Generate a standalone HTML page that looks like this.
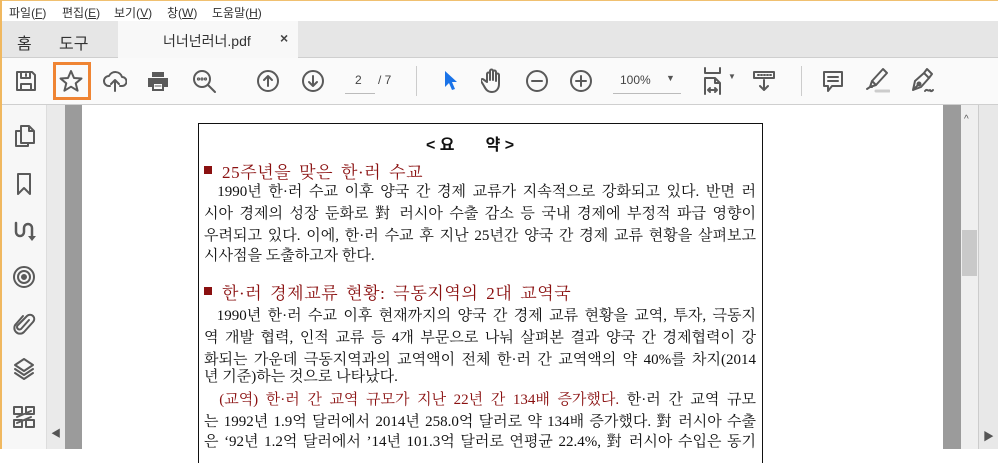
<!DOCTYPE html>
<html><head><meta charset="utf-8"><style>
*{margin:0;padding:0;box-sizing:border-box}
body{width:998px;height:449px;overflow:hidden;position:relative;background:#fff;font-family:"Liberation Sans","Noto Sans CJK KR",sans-serif}
.a{position:absolute}
.menu{top:0;left:0;width:998px;height:21px;background:#fff;border-top:1px solid #f0c070;font-size:12px;color:#333}
.menu span{position:absolute;top:3px}
.tabs{top:21px;left:0;width:998px;height:37px;background:#e6e6e6;border-bottom:1px solid #cfcfcf}
.tb{top:58px;left:0;width:998px;height:47px;background:#fafafa;border-bottom:1px solid #cfcfcf}
svg.i{position:absolute;fill:none;stroke:#5a5a5a;stroke-width:2;stroke-linecap:round;stroke-linejoin:round}
.doc{font-family:"Liberation Serif","Noto Serif CJK KR",serif;font-size:15px;color:#111}
.ln{position:absolute;left:204px;width:552px;text-align:justify;text-align-last:justify;white-space:nowrap;line-height:18px}
.r{color:#8a1010}
.h{position:absolute;left:222px;font-size:17px;letter-spacing:0.6px;white-space:nowrap;word-spacing:3px}
.b{position:absolute;left:204px;width:8px;height:8px;background:#8a1010}
</style></head><body>
<div class="a" style="left:0;top:0;width:2px;height:449px;background:#f0b860;z-index:9"></div>
<div class="a menu">
<span style="left:9px">파일(<u>F</u>)</span><span style="left:62px">편집(<u>E</u>)</span><span style="left:114px">보기(<u>V</u>)</span><span style="left:167px">창(<u>W</u>)</span><span style="left:212px">도움말(<u>H</u>)</span>
</div>
<div class="a tabs">
<span class="a" style="left:17px;top:9px;font-size:16px;color:#333">홈</span>
<span class="a" style="left:59px;top:9px;font-size:16px;color:#333">도구</span>
<div class="a" style="left:118px;top:0;width:180px;height:37px;background:#f8f8f8"></div>
<span class="a" style="left:163px;top:10px;font-size:14px;color:#333">너너넌러너.pdf</span>
<span class="a" style="left:280px;top:9px;font-size:14px;color:#444;font-weight:bold">×</span>
</div>
<div class="a tb">
<div class="a" style="left:53px;top:4px;width:38px;height:38px;border:3px solid #ef8433"></div>
<div class="a" style="left:345px;top:35px;width:30px;height:1px;background:#bbb"></div>
<span class="a" style="left:355px;top:15px;font-size:12px;color:#444">2</span>
<span class="a" style="left:378px;top:15px;font-size:12px;color:#444">/ 7</span>
<div class="a" style="left:416px;top:8px;width:1px;height:30px;background:#ccc"></div>
<div class="a" style="left:801px;top:8px;width:1px;height:30px;background:#ccc"></div>
<div class="a" style="left:613px;top:35px;width:68px;height:1px;background:#bbb"></div>
<span class="a" style="left:620px;top:15px;font-size:12px;color:#444">100%</span>
<span class="a" style="left:666px;top:15px;font-size:9px;color:#555">▼</span>
<span class="a" style="left:728px;top:14px;font-size:8px;color:#555">▼</span>
</div>
<svg class="i" style="left:15px;top:70px" width="22" height="22" viewBox="0 0 22 22"><path d="M2 2h15l3 3v15H2z M6 2v6h9V2 M11 4v2 M6 20v-6h10v6"/></svg>
<svg class="i" style="left:59px;top:69px" width="24" height="24" viewBox="0 0 24 24"><path d="M12 2l3 7 7.5 .5-5.8 4.8 1.9 7.4L12 17.7l-6.6 4 1.9-7.4L1.5 9.5 9 9z"/></svg>
<svg class="i" style="left:103px;top:70px" width="24" height="22" viewBox="0 0 24 22"><path d="M7 16H6a5 5 0 010-10 7 7 0 0113 1 4.5 4.5 0 010 9h-2 M12 21V10 M8 14l4-4 4 4"/></svg>
<svg class="i" style="left:146px;top:70px" width="24" height="22" viewBox="0 0 24 22"><path d="M6 2h12v5H6z M2 8h20v9h-4v4H6v-4H2z" fill="#5a5a5a" stroke="none"/><path d="M8 14h8v5H8z" fill="#fff" stroke="none"/><path d="M9 16h6" stroke="#5a5a5a" stroke-width="1"/></svg>
<svg class="i" style="left:192px;top:69px" width="26" height="26" viewBox="0 0 26 26"><circle cx="10" cy="10" r="8"/><path d="M16 16l7 7"/><circle cx="6.5" cy="10" r=".6"/><circle cx="10" cy="10" r=".6"/><circle cx="13.5" cy="10" r=".6"/></svg>
<svg class="i" style="left:257px;top:70px" width="22" height="22" viewBox="0 0 22 22"><circle cx="11" cy="11" r="10"/><path d="M11 16V6 M7 10l4-4 4 4"/></svg>
<svg class="i" style="left:302px;top:70px" width="22" height="22" viewBox="0 0 22 22"><circle cx="11" cy="11" r="10"/><path d="M11 6v10 M7 12l4 4 4-4"/></svg>
<svg class="i" style="left:443px;top:70px" width="14" height="22" viewBox="0 0 14 22"><path d="M2 1v16l4-4 3 7 3-1-3-7h5z" fill="#1a73e8" stroke="none"/></svg>
<svg class="i" style="left:481px;top:68px" width="24" height="26" viewBox="0 0 24 26"><path d="M6 14V6a1.5 1.5 0 013 0v6V3a1.5 1.5 0 013 0v9V4a1.5 1.5 0 013 0v9V7a1.5 1.5 0 013 0v9c0 5-3 8-7 8s-6-2-8-6l-3-5a1.5 1.5 0 012.5-1.5z"/></svg>
<svg class="i" style="left:526px;top:70px" width="22" height="22" viewBox="0 0 22 22"><circle cx="11" cy="11" r="10"/><path d="M6 11h10"/></svg>
<svg class="i" style="left:570px;top:70px" width="22" height="22" viewBox="0 0 22 22"><circle cx="11" cy="11" r="10"/><path d="M6 11h10 M11 6v10"/></svg>
<svg class="i" style="left:703px;top:67px" width="20" height="28" viewBox="0 0 20 28"><path d="M2 1v5h15V1 M2 27V11h10l5 5v11 M12 11v5h5 M5 23h9 M5 23l2-2 M5 23l2 2 M14 23l-2-2 M14 23l-2 2"/></svg>
<svg class="i" style="left:752px;top:70px" width="24" height="22" viewBox="0 0 24 22"><path d="M2 2h20v6H2z M12 10v10 M8 16l4 4 4-4"/><path d="M6 5h1 M9 5h1 M12 5h1 M15 5h1 M18 5h1"/></svg>
<svg class="i" style="left:822px;top:70px" width="22" height="24" viewBox="0 0 22 24"><path d="M2 2h18v14H10l-4 5v-5H2z M6 7h10 M6 11h10"/></svg>
<svg class="i" style="left:864px;top:67px" width="26" height="28" viewBox="0 0 26 28"><path d="M6 20l2-6 11-12 4 4-11 12z M8 14l4 4"/><path d="M3 22l3-2h2" /><path d="M12 24h13" stroke="#ccc" stroke-width="3"/></svg>
<svg class="i" style="left:909px;top:67px" width="26" height="28" viewBox="0 0 26 28"><path d="M4 23l2-9 9-8 5 5-8 9z M4 23l6-6 M15 6l3-4 5 5-3 4"/><circle cx="10" cy="17" r="1.5"/><path d="M16 24c2-3 3 1 5-1 1 2 2 1 3 0"/></svg>
<div class="a" style="left:2px;top:105px;width:44px;height:344px;background:#f7f7f7"></div>
<div class="a" style="left:46px;top:105px;width:19px;height:344px;background:#eaeaea;border-left:1px solid #ddd"></div>
<div class="a" style="left:65px;top:105px;width:17px;height:344px;background:#9b9b9b"></div>
<span class="a" style="left:51px;top:425px;font-size:10px;color:#555">◀</span>
<svg class="i" style="left:13px;top:124px" width="24" height="26" viewBox="0 0 24 26"><path d="M8 2h8l5 5v12H8z M16 2v5h5 M8 7H3v15h12v-3"/></svg>
<svg class="i" style="left:15px;top:172px" width="18" height="24" viewBox="0 0 18 24"><path d="M3 2h12v20l-6-6-6 6z"/></svg>
<svg class="i" style="left:12px;top:219px" width="24" height="26" viewBox="0 0 24 26"><path d="M4 4v9a4 4 0 008 0V9a4 4 0 018 0v8" stroke-width="2.5"/><path d="M16 17h8l-4 5z" fill="#5a5a5a" stroke="none"/></svg>
<svg class="i" style="left:12px;top:265px" width="24" height="24" viewBox="0 0 24 24"><circle cx="12" cy="12" r="10"/><circle cx="12" cy="12" r="6"/><circle cx="12" cy="12" r="2" fill="#5a5a5a"/></svg>
<svg class="i" style="left:12px;top:311px" width="24" height="26" viewBox="0 0 24 26"><path d="M17 9l-8 9a2.5 2.5 0 01-3.5-3.5L15 5a4 4 0 016 6l-9 10a5.5 5.5 0 01-8-8l7-8"/></svg>
<svg class="i" style="left:12px;top:357px" width="24" height="26" viewBox="0 0 24 26"><path d="M12 2l9 6-9 6-9-6z M3 12l9 6 9-6 M3 16l9 6 9-6"/></svg>
<svg class="i" style="left:12px;top:405px" width="24" height="24" viewBox="0 0 24 24"><path d="M2 2h8v7H2z M14 2h8v7h-8z M2 15h8v7H2z M14 15h8v7h-8z M5 12l14-6 M5 18l14-6"/></svg>
<div class="a" style="left:943px;top:105px;width:18px;height:344px;background:#9b9b9b"></div>
<div class="a" style="left:961px;top:105px;width:18px;height:344px;background:#efefef;border-right:1px solid #ccc"></div>
<div class="a" style="left:962px;top:230px;width:15px;height:46px;background:#c9c9c9"></div>
<span class="a" style="left:964px;top:114px;font-size:10px;color:#555">^</span>
<div class="a" style="left:979px;top:105px;width:19px;height:344px;background:#e8e8e8"></div>
<span class="a" style="left:983px;top:428px;font-size:11px;color:#555">▶</span>
<div class="a" style="left:198px;top:123px;width:565px;height:340px;border:1px solid #111;border-bottom:none"></div>
<div class="doc">
<div class="a" style="left:426px;top:131px;font-family:'Liberation Sans','Noto Sans CJK KR',sans-serif;font-size:16px;font-weight:bold;white-space:pre">&lt; 요       약 &gt;</div>
<div class="b" style="top:166px"></div>
<div class="h r" style="top:158px">25주년을 맞은 한·러 수교</div>
<div class="ln" style="top:183px">&nbsp;&nbsp;1990년 한·러 수교 이후 양국 간 경제 교류가 지속적으로 강화되고 있다. 반면 러</div>
<div class="ln" style="top:205px">시아 경제의 성장 둔화로 對 러시아 수출 감소 등 국내 경제에 부정적 파급 영향이</div>
<div class="ln" style="top:227px">우려되고 있다. 이에, 한·러 수교 후 지난 25년간 양국 간 경제 교류 현황을 살펴보고</div>
<div class="a" style="left:204px;top:247px;line-height:18px">시사점을 도출하고자 한다.</div>
<div class="b" style="top:287px"></div>
<div class="h r" style="top:279px">한·러 경제교류 현황: 극동지역의 2대 교역국</div>
<div class="ln" style="top:307px">&nbsp;&nbsp;1990년 한·러 수교 이후 현재까지의 양국 간 경제 교류 현황을 교역, 투자, 극동지</div>
<div class="ln" style="top:329px">역 개발 협력, 인적 교류 등 4개 부문으로 나눠 살펴본 결과 양국 간 경제협력이 강</div>
<div class="ln" style="top:351px">화되는 가운데 극동지역과의 교역액이 전체 한·러 간 교역액의 약 40%를 차지(2014</div>
<div class="a" style="left:204px;top:368px;line-height:18px">년 기준)하는 것으로 나타났다.</div>
<div class="ln" style="top:391px">&nbsp;&nbsp;<span class="r">(교역) 한·러 간 교역 규모가 지난 22년 간 134배 증가했다.</span> 한·러 간 교역 규모</div>
<div class="ln" style="top:413px">는 1992년 1.9억 달러에서 2014년 258.0억 달러로 약 134배 증가했다. 對 러시아 수출</div>
<div class="ln" style="top:433px">은 ‘92년 1.2억 달러에서 ’14년 101.3억 달러로 연평균 22.4%, 對 러시아 수입은 동기</div>
</div>
</body></html>
